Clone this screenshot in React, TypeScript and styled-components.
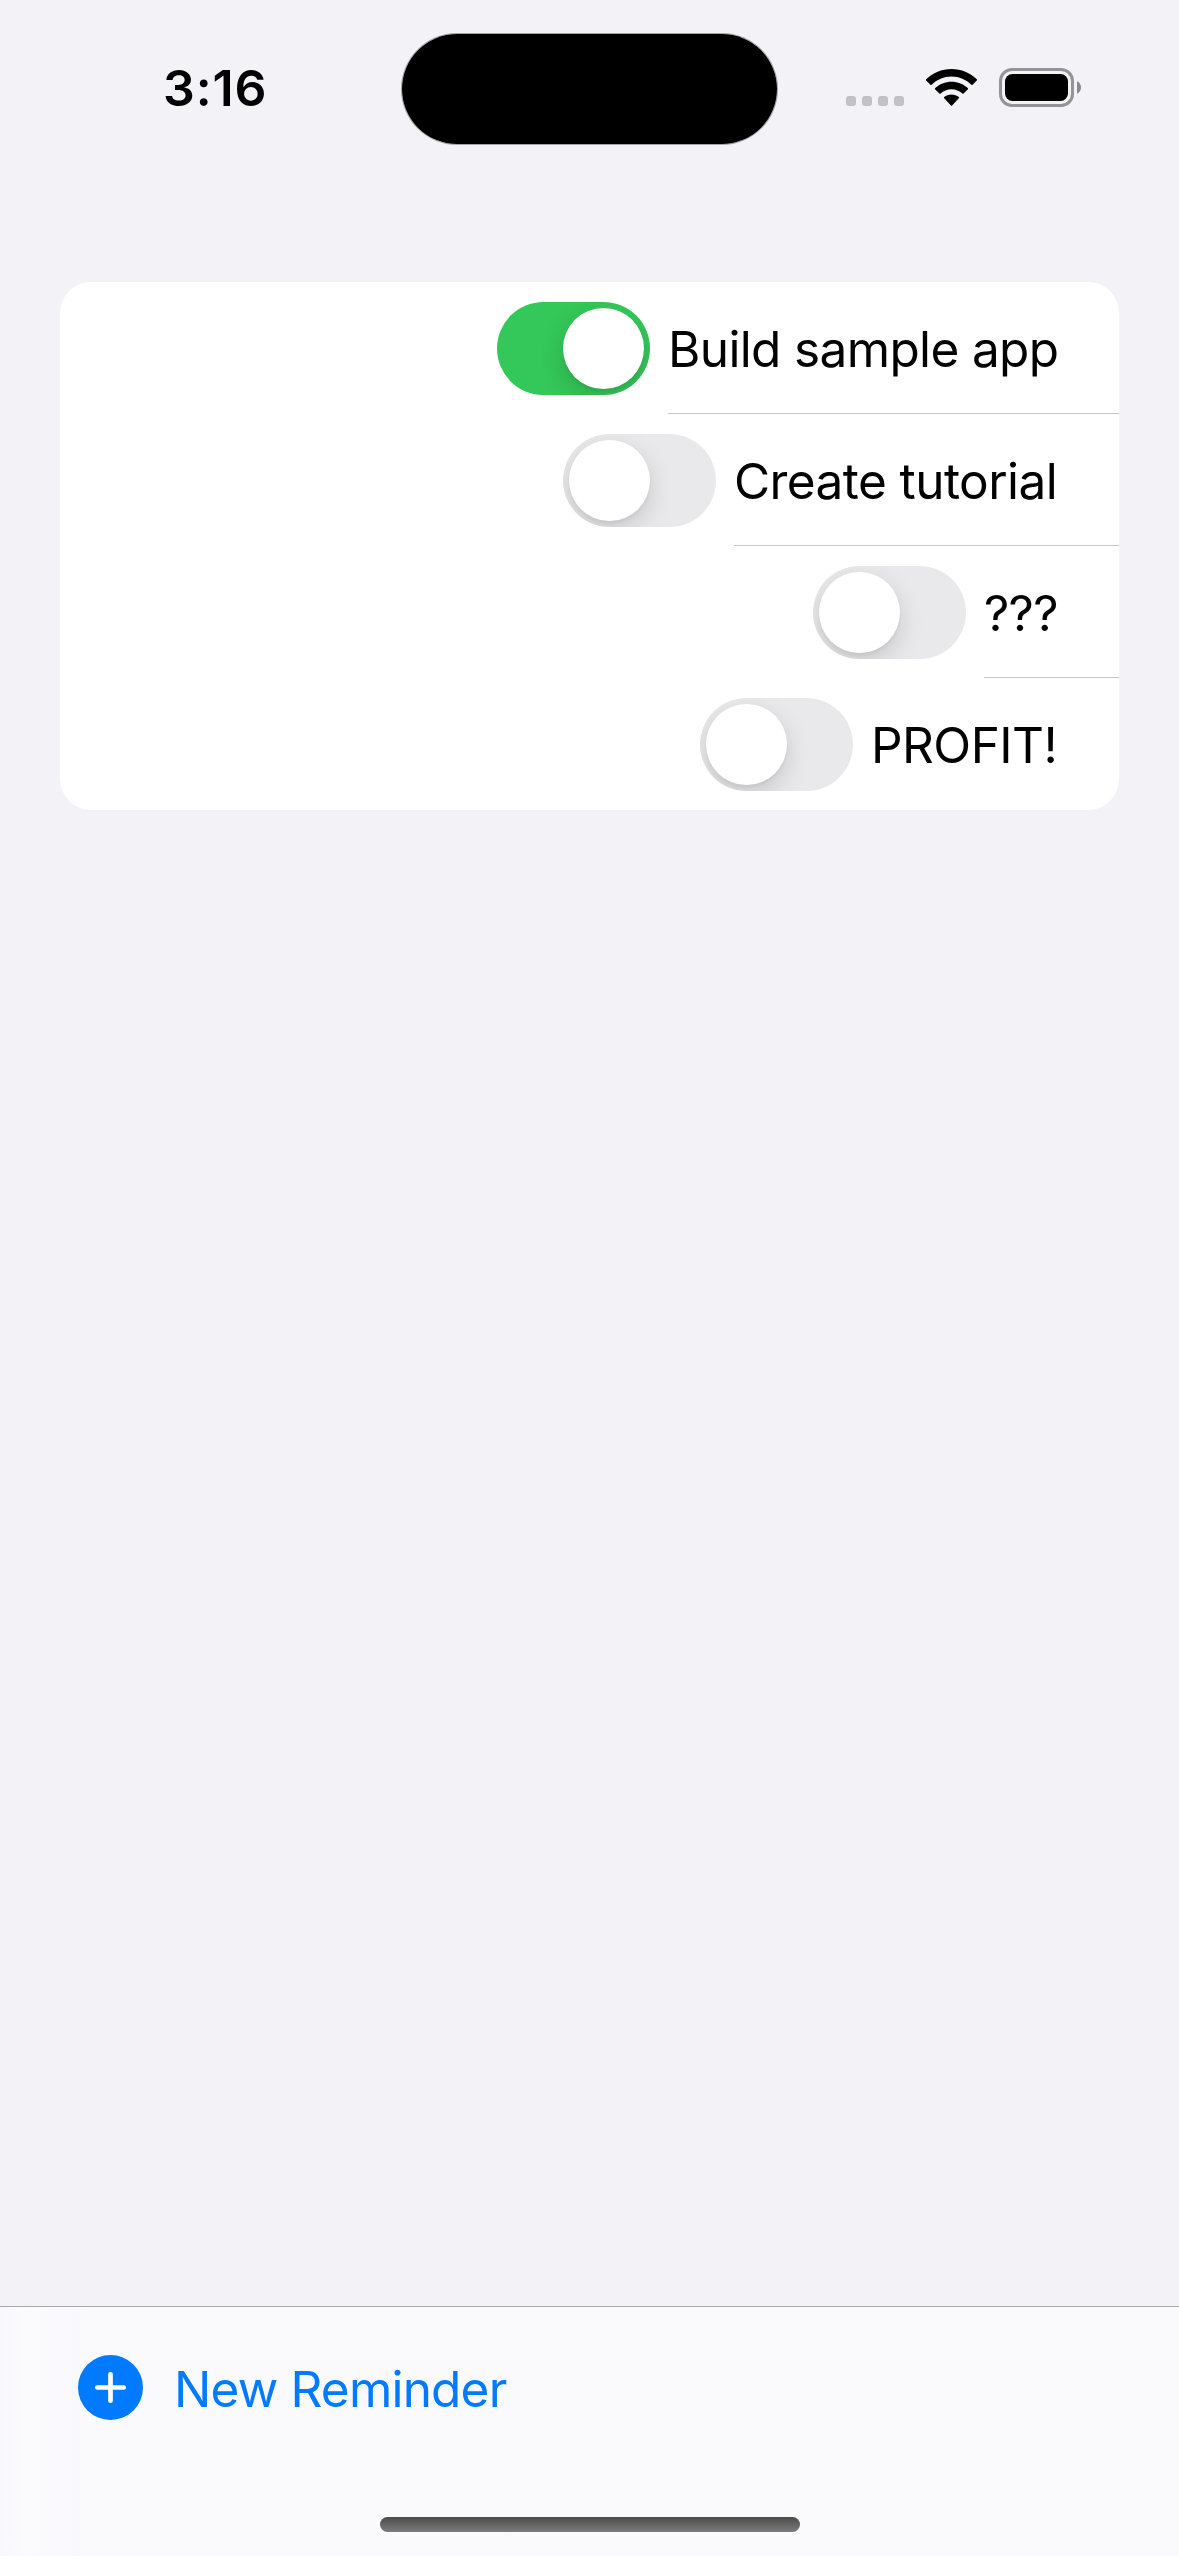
import React, { useState } from "react";
import styled, { createGlobalStyle } from "styled-components";

const GlobalStyle = createGlobalStyle`
  *, *::before, *::after { box-sizing: border-box; }
  html, body { margin: 0; padding: 0; background: #f2f2f7; }
  button { appearance: none; border: 0; padding: 0; margin: 0; background: none; font: inherit; cursor: pointer; }
`;

const Screen = styled.div`
  display: flex;
  flex-direction: column;
  width: 1179px;
  height: 2556px;
  overflow: hidden;
  background: #f2f2f7;
  color: #000;
  font-family: Inter, Roboto, sans-serif;
`;

const StatusBar = styled.header`
  display: grid;
  grid-template-columns: 401px 377px 1fr;
  align-items: start;
  height: 282px;
  padding-top: 33px;
`;

const Clock = styled.time`
  padding-left: 163px;
  padding-top: 24px;
  font-size: 50px;
  font-weight: 600;
  line-height: 62px;
  letter-spacing: 0.85px;
`;

const DynamicIsland = styled.div`
  height: 112px;
  border: 1px solid rgba(0, 0, 0, 0.32);
  border-radius: 56px;
  background: #000;
  background-clip: padding-box;
`;

const Indicators = styled.div`
  display: flex;
  align-items: flex-end;
  padding-left: 68px;
  padding-top: 35px;
`;

const CellularDots = styled.div`
  display: flex;
  gap: 6px;
  padding-bottom: 1px;
`;

const Dot = styled.span`
  width: 10px;
  height: 10px;
  border-radius: 3px;
  background: #c2c1c6;
`;

const WifiIcon = styled.svg`
  width: 51px;
  height: 38px;
  margin-left: 22px;
`;

const Battery = styled.svg`
  width: 83px;
  height: 39px;
  margin-left: 22px;
`;

const Content = styled.main`
  flex: 1;
  padding: 0 60px;
`;

const Card = styled.ul`
  list-style: none;
  margin: 0;
  padding: 0;
  overflow: hidden;
  border-radius: 31px;
  background: #fff;
`;

const Row = styled.li`
  display: flex;
  justify-content: flex-end;
  align-items: center;
  gap: 18px;
  height: 132px;
`;

const Track = styled.button<{ $on: boolean }>`
  display: flex;
  justify-content: ${(p) => (p.$on ? "flex-end" : "flex-start")};
  width: 153px;
  height: 93px;
  margin-top: 1px;
  padding: 6px;
  overflow: hidden;
  border-radius: 47px;
  background: ${(p) => (p.$on ? "#34c759" : "#e9e9eb")};
`;

const Thumb = styled.span`
  width: 81px;
  height: 81px;
  border-radius: 50%;
  background: #fff;
  box-shadow: 0 9px 24px rgba(0, 0, 0, 0.15), 0 3px 3px rgba(0, 0, 0, 0.04);
`;

const Label = styled.span<{ $width: number; $tracking: number; $divider: boolean }>`
  width: ${(p) => p.$width + 60}px;
  height: 132px;
  padding-top: 2px;
  font-size: 49.5px;
  line-height: 130px;
  letter-spacing: ${(p) => p.$tracking}px;
  white-space: nowrap;
  box-shadow: ${(p) => (p.$divider ? "inset 0 -1px 0 #c6c6c8" : "none")};
`;

const Toolbar = styled.footer`
  display: flex;
  flex-direction: column;
  justify-content: space-between;
  align-items: flex-start;
  height: 250px;
  padding: 48px 0 24px 78px;
  border-top: 1px solid #a9a9ac;
  background: linear-gradient(90deg, #f9f9fd 0, #fbfbfd 30px, #f9f9fe 62px, #fafafc 90px);
`;

const NewReminder = styled.button`
  display: flex;
  align-items: flex-start;
  gap: 31px;
  height: 70px;
  color: #007aff;
`;

const PlusIcon = styled.svg`
  width: 65px;
  height: 65px;
`;

const ActionText = styled.span`
  padding-top: 4px;
  font-size: 49.5px;
  line-height: 60px;
  letter-spacing: -0.8px;
  white-space: nowrap;
`;

const HomeIndicator = styled.div`
  width: 420px;
  height: 15px;
  margin-left: 302px;
  border-radius: 7.5px;
  background: linear-gradient(#4b4b4c, #7c7c7d);
`;

interface Reminder {
  title: string;
  done: boolean;
  width: number;
  tracking: number;
}

const initialReminders: Reminder[] = [
  { title: "Build sample app", done: true, width: 391, tracking: -0.64 },
  { title: "Create tutorial", done: false, width: 325, tracking: -0.57 },
  { title: "???", done: false, width: 75, tracking: -0.7 },
  { title: "PROFIT!", done: false, width: 188, tracking: -0.55 },
];

export default function App() {
  const [reminders, setReminders] = useState(initialReminders);

  const toggle = (index: number) =>
    setReminders((list) =>
      list.map((item, i) => (i === index ? { ...item, done: !item.done } : item))
    );

  return (
    <>
      <GlobalStyle />
      <Screen>
        <StatusBar>
          <Clock>3:16</Clock>
          <DynamicIsland />
          <Indicators>
            <CellularDots>
              <Dot />
              <Dot />
              <Dot />
              <Dot />
            </CellularDots>
            <WifiIcon viewBox="0 0 51 38">
              <path d="M25.5 0C35.3 0 44.2 3.800 50.8 10.300a.9.9 0 0 1 0 1.300L46.600 15.700a.9.9 0 0 1-1.200 0C40.200 10.800 33.200 7.500 25.500 7.500S10.800 10.800 5.600 15.700a.9.9 0 0 1-1.200 0L.2 11.600a.9.9 0 0 1 0-1.300C6.800 3.800 15.700 0 25.500 0Z" />
              <path d="M25.500 12.800c6.300 0 12 2.400 16.300 6.300a.9.9 0 0 1 0 1.300L37.600 24.500a.9.9 0 0 1-1.200 0C33.500 21.900 29.700 20.300 25.500 20.300s-8 1.600-10.900 4.200a.9.9 0 0 1-1.200 0L9.200 20.400a.9.9 0 0 1 0-1.300c4.300-3.900 10-6.300 16.300-6.300Z" />
              <path d="M25.500 25.400c2.800 0 5.300 1 7.300 2.600a.9.9 0 0 1 0 1.300l-6.700 7.200a.9.9 0 0 1-1.200 0l-6.700-7.200a.9.9 0 0 1 0-1.300c2-1.600 4.500-2.600 7.300-2.600Z" />
            </WifiIcon>
            <Battery viewBox="0 0 83 39">
              <rect x="1.500" y="1.500" width="72" height="36" rx="11.500" fill="none" stroke="#949497" strokeWidth="3" />
              <rect x="6" y="6" width="63" height="27" rx="7.500" />
              <path d="M78 13.200c2.400 1 4 3.400 4 6.300s-1.600 5.300-4 6.300Z" fill="#8a8a8c" />
            </Battery>
          </Indicators>
        </StatusBar>
        <Content>
          <Card>
            {reminders.map((item, i) => (
              <Row key={item.title}>
                <Track
                  $on={item.done}
                  role="switch"
                  aria-checked={item.done}
                  onClick={() => toggle(i)}
                >
                  <Thumb />
                </Track>
                <Label
                  $width={item.width}
                  $tracking={item.tracking}
                  $divider={i < reminders.length - 1}
                >
                  {item.title}
                </Label>
              </Row>
            ))}
          </Card>
        </Content>
        <Toolbar>
          <NewReminder>
            <PlusIcon viewBox="0 0 65 65">
              <circle cx="32.500" cy="32.500" r="32.500" fill="#007aff" />
              <path d="M32.500 19.300v26.400M19.300 32.500h26.400" stroke="#fff" strokeWidth="4.700" strokeLinecap="round" />
            </PlusIcon>
            <ActionText>New Reminder</ActionText>
          </NewReminder>
          <HomeIndicator />
        </Toolbar>
      </Screen>
    </>
  );
}
